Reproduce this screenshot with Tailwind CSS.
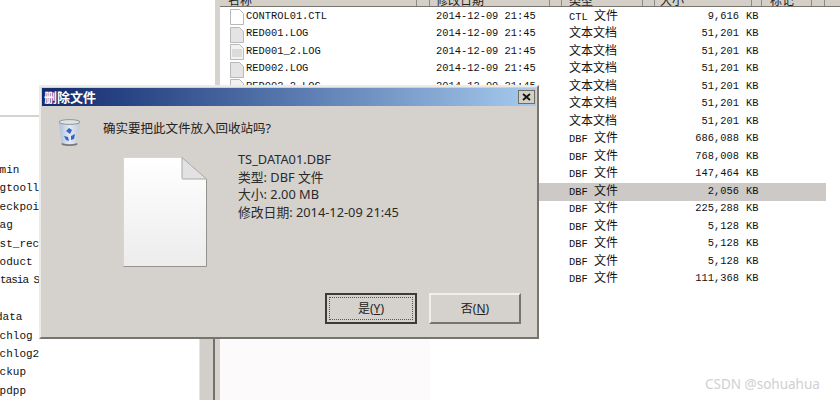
<!DOCTYPE html>
<html lang="en">
<head>
  <meta charset="UTF-8">
  <title>删除文件</title>
  <script src="https://cdn.jsdelivr.net/npm/@tailwindcss/browser@4"></script>
</head>
<body class="w-[840px] h-[400px] overflow-hidden bg-white relative" style="font-family: 'Liberation Mono', 'Noto Sans CJK SC', monospace;">
  <!-- left tree pane -->
  <div class="absolute left-0 top-0 w-[215px] h-[400px] bg-white overflow-hidden">
    <div class="h-[117px] border-b-2 border-[#d4d3d0]"></div>
    <div class="pt-[44px] -ml-[7px] text-[11px] leading-[18.4px] text-[#111]">
      <p>dmin</p>
      <p>fgtooll</p>
      <p>heckpoi</p>
      <p>lag</p>
      <p>ast_rec</p>
      <p>roduct</p>
      <p class="ml-[7px] tracking-[-1px]">tasia S</p>
      <p class="h-[18.4px]"></p>
      <p class="ml-[3px]">data</p>
      <p>rchlog</p>
      <p>rchlog2</p>
      <p>ackup</p>
      <p>ppdpp</p>
    </div>
  </div>

  <!-- splitter, lower part only shows under the dialog -->
  <div class="absolute left-[199px] top-[339px] h-[61px] flex">
    <div class="w-[14px] bg-[#d2cfcb] border-l border-[#e6e5e3]"></div>
    <div class="w-[2px] bg-[#74716d]"></div>
  </div>
  <div class="absolute left-[215px] top-0 h-[400px] w-[5px] bg-[#d6d3cf]"></div>

  <!-- file list -->
  <div class="absolute left-[220px] top-0 w-[620px] h-[400px] bg-white">
    <div class="h-[7px] bg-[#d4d0c8] border-b border-[#77746f] flex text-[12px] leading-[5px] text-[#222] overflow-hidden">
      <span class="w-[197px] pl-[8px] border-r border-[#8d8a84]">名称</span>
      <span class="w-[13px] border-r border-[#8d8a84]"></span>
      <span class="w-[120px] pl-[6px] border-r border-[#8d8a84]">修改日期</span>
      <span class="w-[12px] border-r border-[#8d8a84]"></span>
      <span class="w-[81px] pl-[7px] border-r border-[#8d8a84]">类型</span>
      <span class="w-[12px] border-r border-[#8d8a84]"></span>
      <span class="w-[97px] pl-[5px] border-r border-[#8d8a84]">大小</span>
      <span class="w-[10px] border-r border-[#8d8a84]"></span>
      <span class="w-[50px] pl-[8px] border-r border-[#8d8a84]">标记</span>
      <span class="w-[13px] border-r border-[#8d8a84]"></span>
    </div>
    <div id="rows" class="pt-[1px] text-[10.4px] text-[#111]"></div>
  </div>
  <div class="absolute left-[220px] top-[339px] w-[210px] h-[61px] bg-[#fcfafa]"></div>

  <!-- delete dialog -->
  <div class="absolute left-[39px] top-[85px] w-[500px] h-[254px] bg-[#d5d1cc] border-t-[2px] border-l-[2px] border-[#ecebe8] border-r-[2px] border-r-[#77746f] border-b-[2px] border-b-[#77746f] flex flex-col" style="font-family: 'Noto Sans', 'Noto Sans CJK SC', sans-serif;">
    <div class="mx-[1px] mt-[1px] h-[18px] bg-gradient-to-r from-[#14296e] to-[#a7cbee] flex items-center justify-between pl-[2px] pr-[1px]">
      <span class="text-[13px] font-bold text-white leading-none">删除文件</span>
      <span class="w-[17px] h-[14px] bg-[#d4d0c8] border border-[#6f6d68] flex items-center justify-center">
        <svg width="9" height="8" viewBox="0 0 9 8"><path d="M1 1l7 6M8 1L1 7" stroke="#111" stroke-width="1.7"/></svg>
      </span>
    </div>
    <div class="flex items-center pl-[17px] pt-[13px]">
      <svg width="23" height="28" viewBox="0 0 23 28">
        <defs><linearGradient id="bin" x1="0" y1="0" x2="1" y2="0"><stop offset="0" stop-color="#aebfd8"/><stop offset=".5" stop-color="#e4eaf3"/><stop offset="1" stop-color="#c3c9d0"/></linearGradient></defs>
        <path d="M1 3h21l-2.6 22q-8 2-15.8 0z" fill="url(#bin)"/>
        <ellipse cx="11.5" cy="3" rx="10.5" ry="2.4" fill="#dfe3e6" stroke="#8f9498"/>
        <path d="M3.6 24q8 2.6 15.8 0l-.2 2q-7.700 2-15.400 0z" fill="#77787a"/>
        <path d="M8 12l3-3 3 2-2 4zM6 17l4 1 1 4-3-1zM13 17l4-2-1 5-3 1z" fill="#3566c6"/>
      </svg>
      <span class="ml-[22px] text-[12.5px] text-[#222] leading-none -mt-[7px]">确实要把此文件放入回收站吗?</span>
    </div>
    <div class="flex pl-[82px] pt-[10px]">
      <svg width="84" height="110" viewBox="0 0 84 110">
        <defs><linearGradient id="pg" x1="0" y1="0" x2="0" y2="1"><stop offset="0" stop-color="#ffffff"/><stop offset="1" stop-color="#ececec"/></linearGradient></defs>
        <path d="M.5.5H59L83.500 22v87.500H.5z" fill="url(#pg)" stroke="#d8d6d2"/>
        <path d="M.5 109.500h83V22" fill="none" stroke="#96938f"/>
        <path d="M59 .5V21q0 1 1 1h23.500z" fill="#e2e2e2" stroke="#aaa8a4"/>
      </svg>
      <div class="ml-[31px] text-[12.8px] leading-[17.5px] text-[#2a2a2a] -mt-[6px]">
        <p>TS_DATA01.DBF</p>
        <p>类型: DBF 文件</p>
        <p>大小: 2.00 MB</p>
        <p>修改日期: 2014-12-09 21:45</p>
      </div>
    </div>
    <div class="mt-auto flex justify-end gap-[12px] pr-[16px] pb-[13px]">
      <button class="w-[92px] h-[31px] bg-[#d5d1cc] border-2 border-[#3d3b38] text-[12px] text-[#222] p-[2px]"><span class="flex h-full items-center justify-center border border-dotted border-[#555]">是(<u>Y</u>)</span></button>
      <button class="w-[92px] h-[31px] bg-[#d5d1cc] border-t-2 border-l-2 border-[#f0efec] border-r-2 border-r-[#77746f] border-b-2 border-b-[#77746f] text-[12px] text-[#222]">否(<u>N</u>)</button>
    </div>
  </div>

  <!-- watermark -->
  <div class="absolute left-[705px] top-[378px] text-[13.5px] leading-none text-[#d0d0d0]" style="font-family: 'Noto Sans', sans-serif;">CSDN @sohuahua</div>

  <script>
    const TXT = '<span class="text-[12px]">文本文档</span>';
    const DBF = 'DBF <span class="text-[12px]">文件</span>';
    const files = [
      { name: 'CONTROL01.CTL', icon: '#ffffff', type: 'CTL <span class="text-[12px]">文件</span>', size: '9,616' },
      { name: 'RED001.LOG', icon: '#e4e4e4', type: TXT, size: '51,201' },
      { name: 'RED001_2.LOG', icon: '#f2f2f2', lines: true, type: TXT, size: '51,201' },
      { name: 'RED002.LOG', icon: '#e4e4e4', type: TXT, size: '51,201' },
      { name: 'RED002_2.LOG', icon: '#f2f2f2', type: TXT, size: '51,201' },
      { type: TXT, size: '51,201' },
      { type: TXT, size: '51,201' },
      { type: DBF, size: '686,088' },
      { type: DBF, size: '768,008' },
      { type: DBF, size: '147,464' },
      { type: DBF, size: '2,056', selected: true },
      { type: DBF, size: '225,288' },
      { type: DBF, size: '5,128' },
      { type: DBF, size: '5,128' },
      { type: DBF, size: '5,128' },
      { type: DBF, size: '111,368' }
    ];

    document.getElementById('rows').innerHTML = files.map(f => {
      const lines = f.lines ? '<path d="M2 6h10M2 8h10M2 10h10M2 12h10" stroke="#c4c4c4"/>' : '';
      const icon = f.icon
        ? `<svg class="absolute left-[10px] top-[1px]" width="14" height="16" viewBox="0 0 14 16"><path d="M.5.5h9l4 4v11H.5z" fill="${f.icon}" stroke="#b9b9b9"/>${lines}</svg>`
        : '';
      return `<div class="relative h-[17.5px] flex items-center pl-[26px] ${f.selected ? 'bg-[#ccc9c6] w-[606px]' : ''}">
        ${icon}
        <span class="w-[190px]">${f.name || ''}</span>
        <span class="w-[133px]">${f.name ? '2014-12-09 21:45' : ''}</span>
        <span class="w-[70px]">${f.type}</span>
        <span class="w-[100px] text-right">${f.size}</span>
        <span class="ml-[7px]">KB</span>
      </div>`;
    }).join('');
  </script>
</body>
</html>
